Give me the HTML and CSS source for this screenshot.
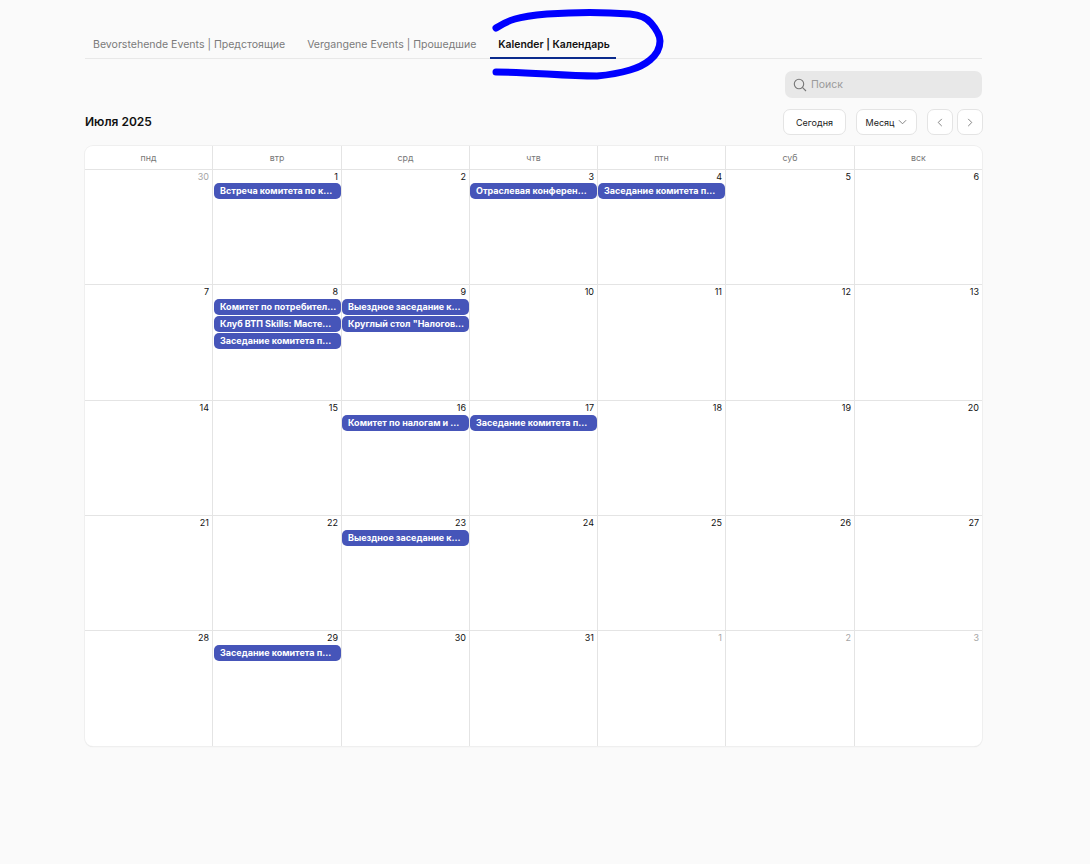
FILE: index.html
```html
<!DOCTYPE html>
<html lang="ru">
<head>
<meta charset="utf-8">
<title>Календарь</title>
<link rel="stylesheet" href="styles.css">
</head>
<body>
<main class="page">
  <nav class="tabs">
    <a class="tab">Bevorstehende Events | Предстоящие</a>
    <a class="tab">Vergangene Events | Прошедшие</a>
    <a class="tab active">Kalender | Календарь</a>
  </nav>
  <div class="search-row">
    <div class="search">
      <svg class="search-icon" viewBox="0 0 14 14" width="14" height="14"><circle cx="6" cy="6" r="4.7"/><path d="M9.4 9.4 13 13"/></svg>
      <span>Поиск</span>
    </div>
  </div>
  <div class="toolbar">
    <h1 class="title">Июля 2025</h1>
    <div class="controls">
      <button class="btn today">Сегодня</button>
      <button class="btn month">Месяц <svg viewBox="0 0 10 6" width="9" height="6"><path d="M1 1l4 4 4-4"/></svg></button>
      <div class="nav-btns">
        <button class="btn icon"><svg viewBox="0 0 6 10" width="6" height="9"><path d="M5 1 1 5l4 4"/></svg></button>
        <button class="btn icon"><svg viewBox="0 0 6 10" width="6" height="9"><path d="M1 1l4 4-4 4"/></svg></button>
      </div>
    </div>
  </div>
  <section class="calendar">
    <div class="head">
      <div>пнд</div><div>втр</div><div>срд</div><div>чтв</div><div>птн</div><div>суб</div><div>вск</div>
    </div>
    <div class="week r1">
      <div class="day"><span class="num muted">30</span></div>
      <div class="day"><span class="num">1</span><div class="ev">Встреча комитета по к...</div></div>
      <div class="day"><span class="num">2</span></div>
      <div class="day"><span class="num">3</span><div class="ev">Отраслевая конферен...</div></div>
      <div class="day"><span class="num">4</span><div class="ev">Заседание комитета п...</div></div>
      <div class="day"><span class="num">5</span></div>
      <div class="day"><span class="num">6</span></div>
    </div>
    <div class="week r2">
      <div class="day"><span class="num">7</span></div>
      <div class="day"><span class="num">8</span><div class="ev">Комитет по потребител...</div><div class="ev">Клуб ВТП Skills: Масте...</div><div class="ev">Заседание комитета п...</div></div>
      <div class="day"><span class="num">9</span><div class="ev">Выездное заседание к...</div><div class="ev">Круглый стол "Налогов...</div></div>
      <div class="day"><span class="num">10</span></div>
      <div class="day"><span class="num">11</span></div>
      <div class="day"><span class="num">12</span></div>
      <div class="day"><span class="num">13</span></div>
    </div>
    <div class="week r3">
      <div class="day"><span class="num">14</span></div>
      <div class="day"><span class="num">15</span></div>
      <div class="day"><span class="num">16</span><div class="ev">Комитет по налогам и ...</div></div>
      <div class="day"><span class="num">17</span><div class="ev">Заседание комитета п...</div></div>
      <div class="day"><span class="num">18</span></div>
      <div class="day"><span class="num">19</span></div>
      <div class="day"><span class="num">20</span></div>
    </div>
    <div class="week r4">
      <div class="day"><span class="num">21</span></div>
      <div class="day"><span class="num">22</span></div>
      <div class="day"><span class="num">23</span><div class="ev">Выездное заседание к...</div></div>
      <div class="day"><span class="num">24</span></div>
      <div class="day"><span class="num">25</span></div>
      <div class="day"><span class="num">26</span></div>
      <div class="day"><span class="num">27</span></div>
    </div>
    <div class="week r5">
      <div class="day"><span class="num">28</span></div>
      <div class="day"><span class="num">29</span><div class="ev">Заседание комитета п...</div></div>
      <div class="day"><span class="num">30</span></div>
      <div class="day"><span class="num">31</span></div>
      <div class="day"><span class="num muted">1</span></div>
      <div class="day"><span class="num muted">2</span></div>
      <div class="day"><span class="num muted">3</span></div>
    </div>
  </section>
</main>
<svg class="scribble" viewBox="0 0 1090 100" width="1090" height="100"><path d="M496 28C502 24 508 21 515 19C525 16 536 15 547 14C575 12 605 12 630 14C640 15 647 18 651 23C657 30 660 35 660 41C660 48 656 55 650 60C644 65 637 68 630 70C620 73 608 75 597 76C580 76 563 75 547 74C530 73 513 72 496 72"/></svg>
</body>
</html>
```
FILE: styles.css
```css
* { box-sizing: border-box; }
html, body { margin: 0; padding: 0; }
body {
  background: #fafafa;
  font-family: Inter, "Noto Sans", sans-serif;
  color: #111;
  height: 864px;
  overflow: hidden;
  position: relative;
}
.page {
  width: 897px;
  margin-left: 85px;
  padding-top: 30px;
}
.tabs {
  display: flex;
  gap: 6px;
  height: 29px;
  border-bottom: 1px solid #e8e8e8;
  font-size: 10.55px;
  line-height: 29px;
}
.tab {
  color: #7a7a7a;
  padding: 0 8px;
  height: 29px;
  white-space: nowrap;
}
.tab.active {
  color: #111;
  font-size: 10.4px;
  font-weight: 600;
  width: 126px;
  border-bottom: 2px solid #0a2a8c;
}
.search-row {
  display: flex;
  justify-content: flex-end;
  margin-top: 12px;
}
.search {
  width: 197px;
  height: 27px;
  background: #e8e8e8;
  border-radius: 7px;
  display: flex;
  align-items: center;
  gap: 4px;
  padding-left: 8px;
  font-size: 10.5px;
  color: #9a9a9a;
}
.search-icon { fill: none; stroke: #777; stroke-width: 1.1; }
.toolbar {
  display: flex;
  justify-content: space-between;
  align-items: center;
  margin: 11px -1px 0 0;
  height: 26px;
}
.title {
  margin: 0 0 2px;
  font-size: 12px;
  font-weight: 600;
  color: #111;
}
.controls { display: flex; gap: 10px; }
.nav-btns { display: flex; gap: 4px; }
.btn {
  height: 26px;
  border: 1px solid #e4e4e4;
  border-radius: 7px;
  background: #fff;
  font: 400 9px Inter, sans-serif;
  color: #222;
  display: flex;
  align-items: center;
  justify-content: center;
  padding: 0;
}
.btn svg { fill: none; stroke: #777; stroke-width: 1; }
.today { width: 63px; }
.month { width: 61px; gap: 4px; }
.icon { width: 26px; }
.calendar {
  margin-top: 11px;
  width: 897px;
  height: 600px;
  background: #fff;
  border-radius: 8px;
  overflow: hidden;
  box-shadow: 0 0 0 1px #efefef, 0 1px 1px #ddd;
}
.head, .week {
  display: grid;
  grid-template-columns: 128px 129px 128px 128px 128px 129px 127px;
}
.head {
  height: 24px;
  border-bottom: 1px solid #e4e4e4;
  font-size: 8.8px;
  color: #777;
  line-height: 23px;
  text-align: center;
}
.head > div:not(:last-child) { border-right: 1px solid #e4e4e4; }
.r1 { height: 115px; }
.r2 { height: 116px; }
.r3 { height: 115px; }
.r4 { height: 115px; }
.r5 { height: 115px; }
.week { border-bottom: 1px solid #e4e4e4; }
.week:last-child { border-bottom: 0; }
.day {
  padding-top: 1px;
  min-width: 0;
  display: flex;
  flex-direction: column;
  align-items: stretch;
}
.day:not(:last-child) { border-right: 1px solid #e4e4e4; }
.num {
  font-size: 9px;
  line-height: 11px;
  height: 13px;
  text-align: right;
  padding-right: 3px;
  color: #111;
}
.r1 .num { height: 12px; }
.num.muted { color: #a5a5a5; }
.ev {
  background: #4655b9;
  color: #fff;
  font-size: 9px;
  font-weight: 700;
  height: 16px;
  line-height: 16px;
  margin: 0 0 1px;
  padding-left: 6px;
  border-radius: 5px;
  white-space: nowrap;
  overflow: hidden;
}
.day:nth-child(2) .ev { margin-left: 1px; }
.scribble {
  position: absolute;
  left: 0;
  top: 0;
  pointer-events: none;
}
.scribble path {
  fill: none;
  stroke: #0000ff;
  stroke-width: 7;
  stroke-linecap: round;
  stroke-linejoin: round;
}
```
